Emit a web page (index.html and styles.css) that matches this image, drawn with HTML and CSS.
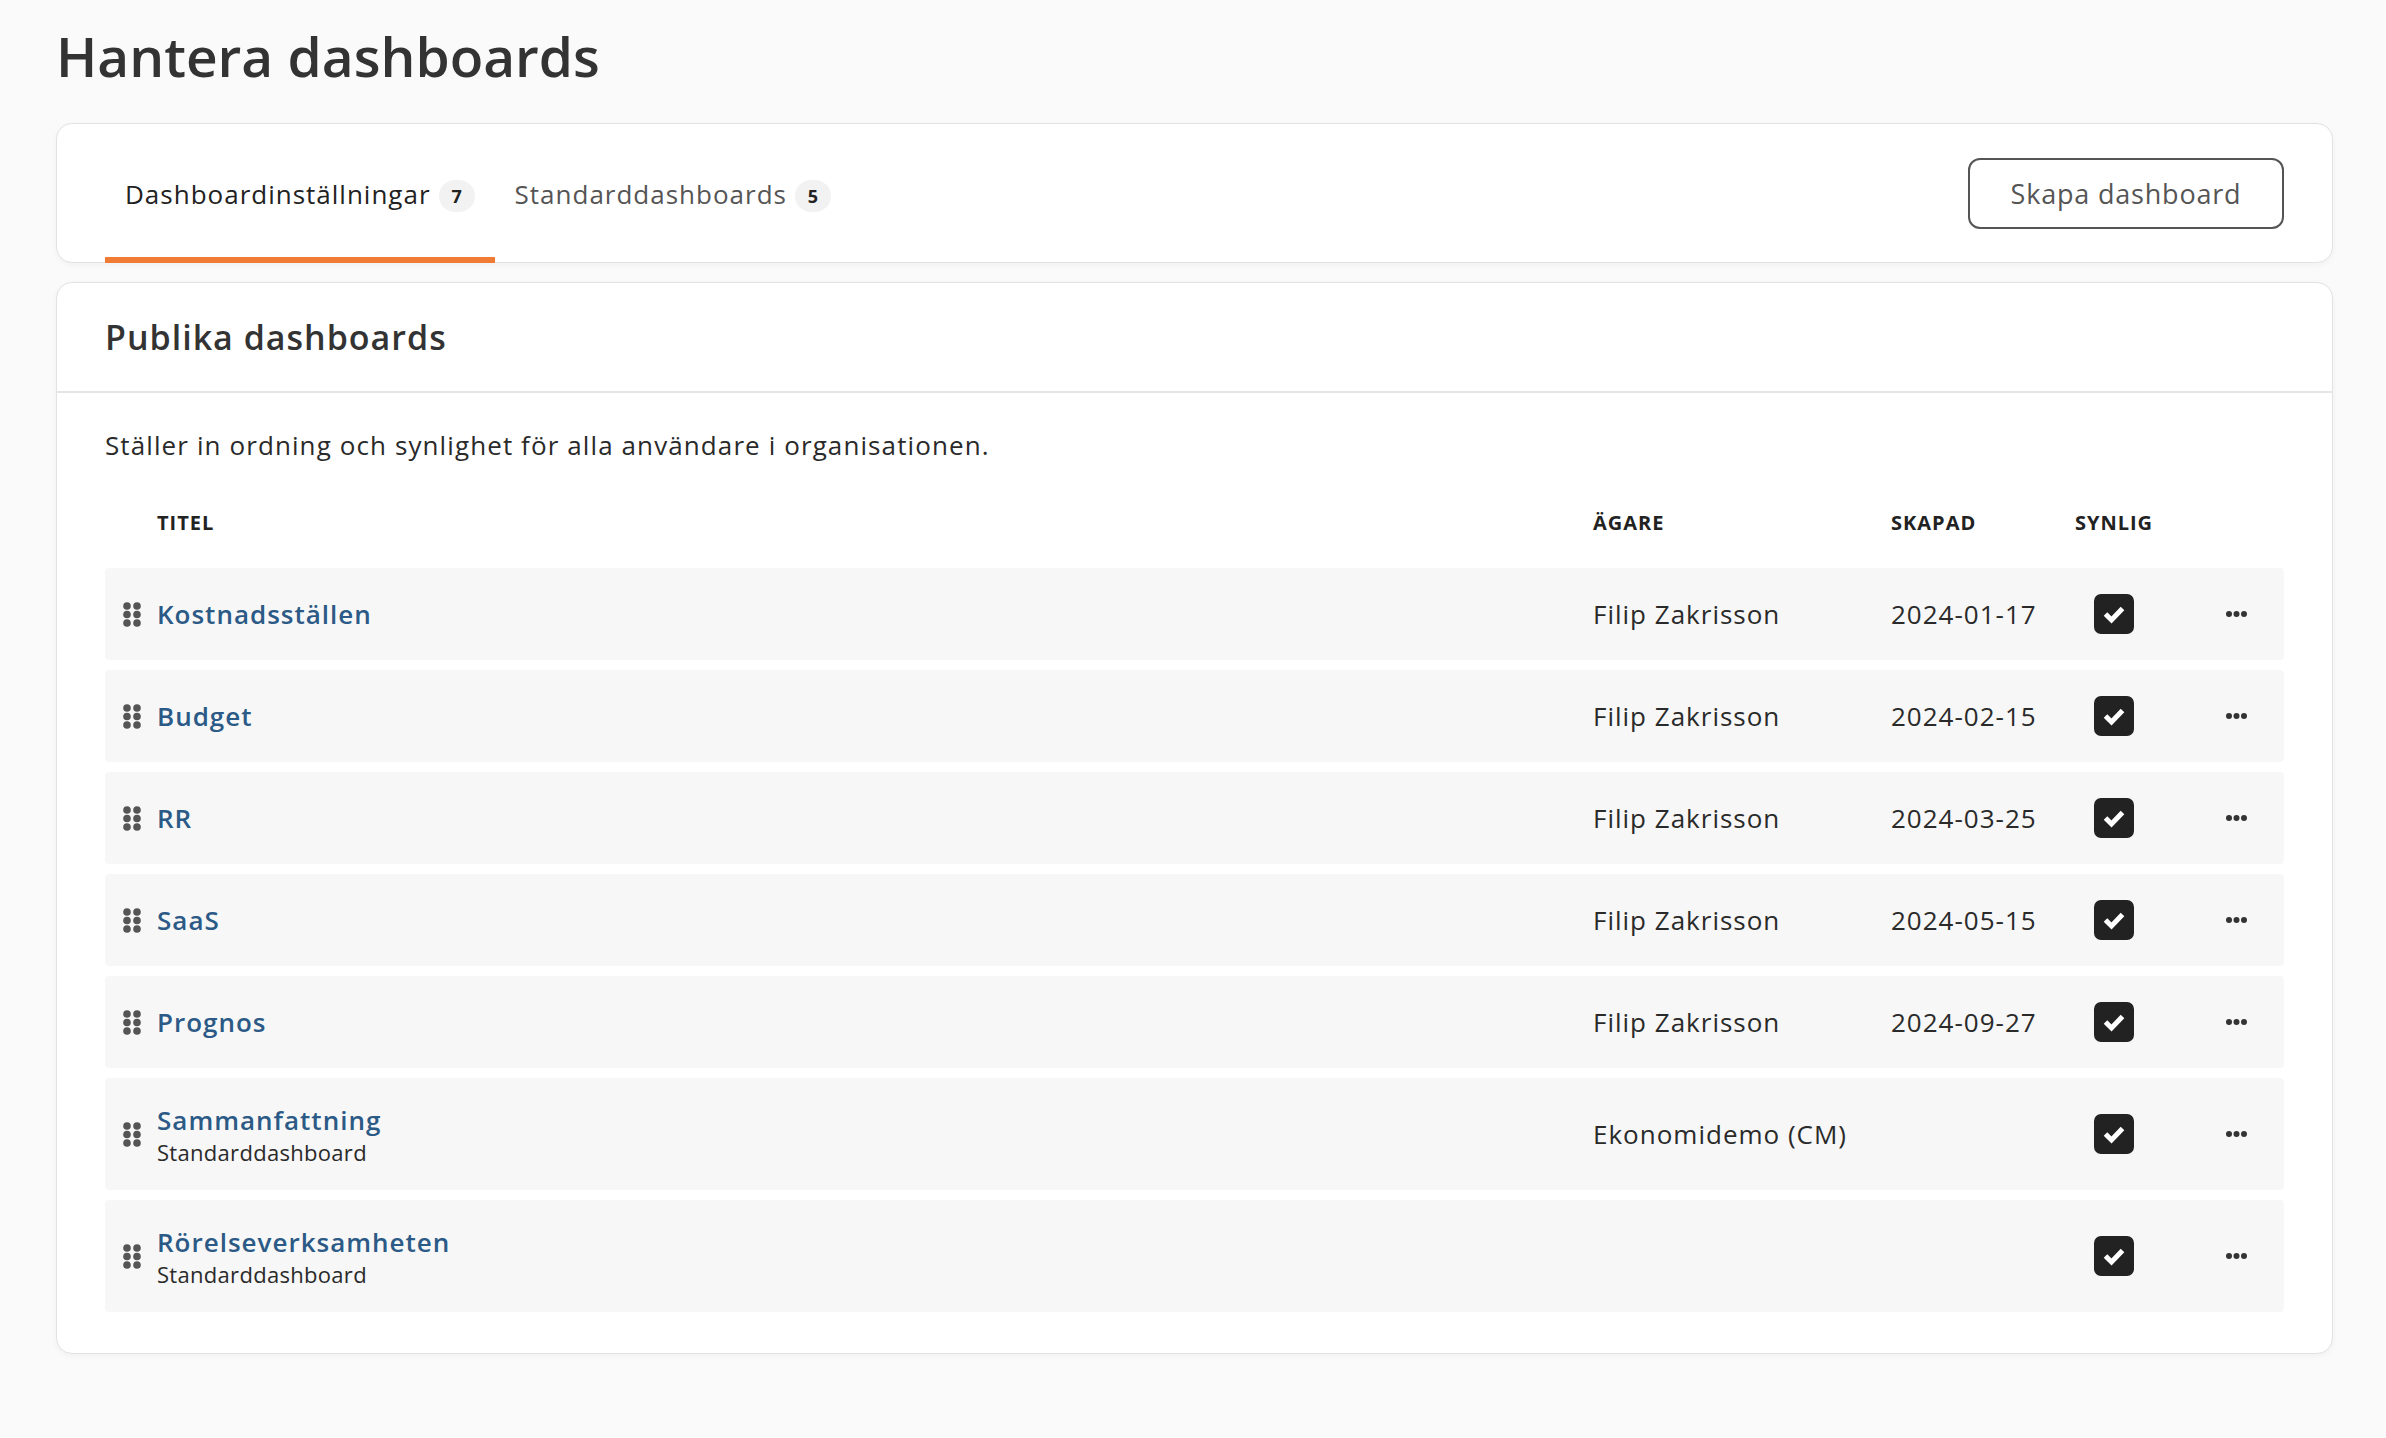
FILE: index.html
```html
<!DOCTYPE html>
<html lang="sv">
<head>
    <meta charset="UTF-8">
    <meta name="viewport" content="width=device-width, initial-scale=1.0">
    <title>Hantera dashboards</title>
    <link rel="stylesheet" href="styles.css">
</head>
<body>

<div class="page">
    <h1 class="page-title">Hantera dashboards</h1>

    <!-- Tabs + create button -->
    <div class="card tabs-card">
        <nav class="tabs">
            <a class="tab active" href="#">Dashboardinställningar <span class="badge">7</span></a>
            <a class="tab" href="#">Standarddashboards <span class="badge">5</span></a>
        </nav>
        <button class="btn-outline" type="button">Skapa dashboard</button>
    </div>

    <!-- Public dashboards list -->
    <div class="card list-card">
        <div class="card-header">
            <h2>Publika dashboards</h2>
        </div>
        <div class="card-body">
            <p class="desc">Ställer in ordning och synlighet för alla användare i organisationen.</p>

            <div class="grid head">
                <span></span>
                <span>Titel</span>
                <span>Ägare</span>
                <span>Skapad</span>
                <span class="center">Synlig</span>
                <span></span>
            </div>

            <div class="rows" id="rows"></div>
        </div>
    </div>
</div>

<script>
var dashboards = [
    { title: "Kostnadsställen", owner: "Filip Zakrisson", created: "2024-01-17" },
    { title: "Budget", owner: "Filip Zakrisson", created: "2024-02-15" },
    { title: "RR", owner: "Filip Zakrisson", created: "2024-03-25" },
    { title: "SaaS", owner: "Filip Zakrisson", created: "2024-05-15" },
    { title: "Prognos", owner: "Filip Zakrisson", created: "2024-09-27" },
    { title: "Sammanfattning", sub: "Standarddashboard", owner: "Ekonomidemo (CM)", created: "" },
    { title: "Rörelseverksamheten", sub: "Standarddashboard", owner: "", created: "" }
];

// drag handle: 2 x 3 dots
var handle = '<svg width="18" height="25" viewBox="0 0 18 25"><g fill="#555">' +
    '<circle cx="4" cy="4" r="3.8"/><circle cx="14" cy="4" r="3.8"/>' +
    '<circle cx="4" cy="12.5" r="3.8"/><circle cx="14" cy="12.5" r="3.8"/>' +
    '<circle cx="4" cy="21" r="3.8"/><circle cx="14" cy="21" r="3.8"/></g></svg>';

var check = '<span class="checkbox"><svg width="40" height="40" viewBox="0 0 40 40">' +
    '<path d="M11.5 20 L17.5 26 L28.5 14.5" fill="none" stroke="#fff" stroke-width="5" stroke-linejoin="miter"/></svg></span>';

var more = '<svg width="21" height="6" viewBox="0 0 21 6"><g fill="#333">' +
    '<circle cx="3" cy="3" r="3"/><circle cx="10.5" cy="3" r="3"/><circle cx="18" cy="3" r="3"/></g></svg>';

var html = "";
for (var i = 0; i < dashboards.length; i++) {
    var d = dashboards[i];
    html += '<div class="grid row' + (d.sub ? ' tall' : '') + '">' +
        '<span class="handle">' + handle + '</span>' +
        '<span class="title-cell"><a href="#">' + d.title + '</a>' +
        (d.sub ? '<small>' + d.sub + '</small>' : '') + '</span>' +
        '<span>' + d.owner + '</span>' +
        '<span>' + d.created + '</span>' +
        '<span class="center">' + check + '</span>' +
        '<span class="more">' + more + '</span>' +
        '</div>';
}
document.getElementById("rows").innerHTML = html;
</script>

</body>
</html>
```

FILE: styles.css
```css
* { margin: 0; padding: 0; box-sizing: border-box; }
body { background: #fafafa; color: #333; font-family: "Open Sans", Lato, sans-serif; letter-spacing: 1px; }

.page { padding: 21px 53px 60px 56px; }

.page-title {
    font-size: 55px;
    line-height: 70px;
    font-weight: 600;
    color: #333;
    margin-bottom: 32px;
    letter-spacing: 0;
}

.card {
    background: #fff;
    border: 1px solid #e2e2e2;
    border-radius: 16px;
    box-shadow: 0 2px 6px rgba(0, 0, 0, 0.04);
}

/* tabs card */
.tabs-card {
    height: 140px;
    padding: 0 48px;
    display: flex;
    justify-content: space-between;
    align-items: center;
}
.tabs { display: flex; align-self: stretch; }
.tab {
    display: flex;
    align-items: center;
    gap: 8px;
    padding: 6px 20px 0;
    font-size: 26px;
    font-weight: 500;
    color: #555;
    text-decoration: none;
    border-bottom: 6px solid transparent;
    margin-bottom: -1px;
}
.tab.active { color: #222; border-bottom-color: #f07b35; }
.badge {
    display: inline-flex;
    align-items: center;
    justify-content: center;
    min-width: 36px;
    height: 32px;
    border-radius: 16px;
    background: #f2f2f2;
    font-size: 18px;
    font-weight: 700;
    letter-spacing: 0;
    color: #222;
    margin-top: 4px;
}
.btn-outline {
    width: 316px;
    height: 71px;
    border: 2px solid #555;
    border-radius: 12px;
    background: #fff;
    font-family: inherit;
    font-size: 27px;
    font-weight: 500;
    letter-spacing: 0.8px;
    color: #555;
    cursor: pointer;
}

/* list card */
.list-card { margin-top: 19px; }
.card-header {
    height: 110px;
    padding: 0 48px;
    display: flex;
    align-items: center;
    border-bottom: 2px solid #e6e6e6;
}
.card-header h2 { font-size: 34px; font-weight: 600; color: #333; }
.card-body { padding: 33px 48px 41px; }
.desc { font-size: 26px; line-height: 39px; font-weight: 500; color: #2a2a2a; letter-spacing: 1.1px; }

.grid {
    display: grid;
    grid-template-columns: 34px 1fr 298px 163px 120px 110px;
    align-items: center;
    padding-left: 18px;
}
.center { text-align: center; display: flex; justify-content: center; }

.head {
    margin-top: 46px;
    margin-bottom: 33px;
    font-size: 20px;
    line-height: 24px;
    font-weight: 700;
    text-transform: uppercase;
    color: #222;
}

.rows { display: flex; flex-direction: column; gap: 10px; }
.row {
    height: 92px;
    background: #f7f7f7;
    border-radius: 4px;
    font-size: 26px;
    font-weight: 500;
    color: #2a2a2a;
}
.row.tall { height: 112px; }
.handle { display: flex; align-items: center; }
.title-cell { display: flex; flex-direction: column; }
.title-cell a { color: #2c5a86; text-decoration: none; font-weight: 600; line-height: 36px; }
.title-cell small { font-size: 22px; line-height: 29px; color: #2a2a2a; letter-spacing: 0.3px; }

.checkbox {
    width: 40px;
    height: 40px;
    border-radius: 7px;
    background: #222;
    display: flex;
}
.more { display: flex; justify-content: center; padding-left: 14px; }
```
